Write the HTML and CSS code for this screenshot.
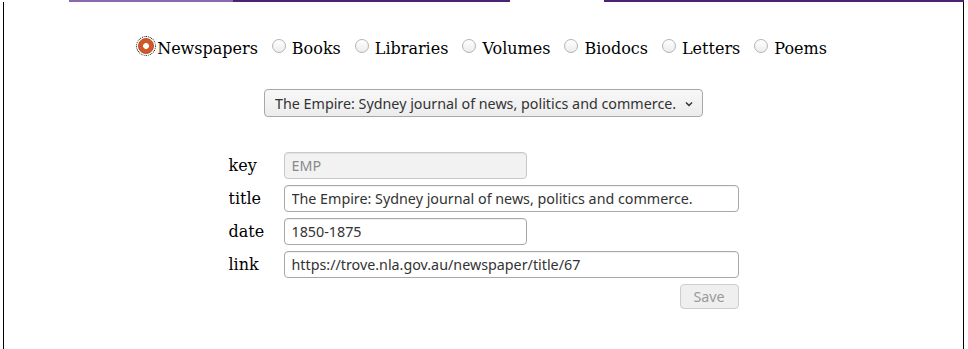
FILE: index.html
```html
<!DOCTYPE html>
<html lang="en">
<head>
  <meta charset="UTF-8" />
  <title>Sources</title>
  <link rel="stylesheet" href="styles.css">
</head>
<body>

  <!-- TAB STRIP (scrolled off, only the underline shows) -->
  <div class="tabline">
    <span class="tab-gap-left"></span>
    <span class="tab tab-hover"></span>
    <span class="tab tab-dark tab-wide"></span>
    <span class="tab-active"></span>
    <span class="tab tab-dark tab-rest"></span>
  </div>

  <div class="panel">

    <!-- SOURCE TYPE -->
    <div class="kinds">
      <label><input type="radio" name="kind" checked class="focused"> Newspapers</label>
      <label><input type="radio" name="kind"> Books</label>
      <label><input type="radio" name="kind"> Libraries</label>
      <label><input type="radio" name="kind"> Volumes</label>
      <label><input type="radio" name="kind"> Biodocs</label>
      <label><input type="radio" name="kind"> Letters</label>
      <label><input type="radio" name="kind"> Poems</label>
    </div>

    <!-- PICKER -->
    <div class="picker">
      <div class="select-wrap">
        <select>
          <option>The Empire: Sydney journal of news, politics and commerce.</option>
        </select>
        <svg class="chevron" width="8" height="6" viewBox="0 0 8 6">
          <path d="M1 1.5 L4 4.5 L7 1.5" fill="none" stroke="#333" stroke-width="1.5"/>
        </svg>
      </div>
    </div>

    <!-- EDIT FORM -->
    <form class="edit">
      <label for="key">key</label>
      <input type="text" id="key" class="short" value="EMP" disabled>

      <label for="title">title</label>
      <input type="text" id="title" class="long" value="The Empire: Sydney journal of news, politics and commerce.">

      <label for="date">date</label>
      <input type="text" id="date" class="short" value="1850-1875">

      <label for="link">link</label>
      <input type="text" id="link" class="long" value="https://trove.nla.gov.au/newspaper/title/67">

      <div class="actions">
        <button type="submit" disabled>Save</button>
      </div>
    </form>

  </div>

</body>
</html>
```

FILE: styles.css
```css
* {
  box-sizing: border-box;
}

body {
  margin: 0;
  font-family: "DejaVu Serif", serif;
  font-size: 16px;
  color: #000;
  background: #fff;
}

/* ===== TAB UNDERLINE ===== */
.tabline {
  display: flex;
  height: 2px;
}

.tab-gap-left {
  width: 69px;
}

.tab {
  background-color: #4a2472;
}

.tab-hover {
  width: 164px;
  background-color: #8a68ac;
}

.tab-wide {
  width: 277px;
}

.tab-active {
  width: 94px;
}

.tab-rest {
  width: 360px;
}

/* ===== PANEL ===== */
.panel {
  margin-left: 3px;
  width: 961px;
  height: 347px;
  border-left: 1px solid #000;
  border-right: 1px solid #000;
}

/* ===== RADIOS ===== */
.kinds {
  display: flex;
  justify-content: center;
  gap: 14px;
  padding-top: 36px;
  padding-right: 4px;
  line-height: 20px;
}

.kinds label {
  display: flex;
  align-items: center;
  gap: 6px;
  white-space: nowrap;
}

.kinds input {
  appearance: none;
  width: 14px;
  height: 14px;
  margin: 0 0 5px 0;
  border: 1px solid #b4b4b4;
  border-radius: 50%;
  background: linear-gradient(#fff, #ececec);
}

.kinds input:checked {
  width: 16px;
  height: 16px;
  margin-left: 2px;
  margin-right: -3px;
  border: 1px solid #b84a22;
  background: radial-gradient(circle, #fff 0 2.6px, #d0582b 3.2px);
}

.kinds input.focused {
  outline: 1px dotted #000;
  outline-offset: 1px;
}

/* ===== SELECT ===== */
.picker {
  display: flex;
  justify-content: center;
  margin-top: 30px;
}

.select-wrap {
  position: relative;
}

.select-wrap select {
  appearance: none;
  width: 439px;
  height: 28px;
  padding: 0 24px 0 10px;
  font-family: "Noto Sans", sans-serif;
  font-size: 14.3px;
  color: #333;
  border: 1px solid #a8a8a8;
  border-radius: 4px;
  background: linear-gradient(#f8f8f8, #ececec);
}

.chevron {
  position: absolute;
  right: 10px;
  top: 12px;
  pointer-events: none;
}

/* ===== FORM ===== */
.edit {
  display: grid;
  grid-template-columns: 55px 455px;
  row-gap: 6px;
  align-items: center;
  width: 510px;
  margin: 35px auto 0;
  line-height: 20px;
}

.edit input {
  height: 27px;
  padding: 0 7px;
  font-family: "Noto Sans", sans-serif;
  font-size: 14.3px;
  color: #333;
  border: 1px solid #a8a8a8;
  border-radius: 4px;
  background: #fff;
  box-shadow: inset 0 1px 1px rgba(0, 0, 0, 0.06);
}

.edit input.short {
  width: 243px;
}

.edit input.long {
  width: 455px;
}

.edit input:disabled {
  color: #8a8a8a;
  background: #f2f2f2;
  border-color: #c9c9c9;
}

.actions {
  grid-column: 2;
  display: flex;
  justify-content: flex-end;
}

.actions button {
  height: 25px;
  width: 59px;
  font-family: "Noto Sans", sans-serif;
  font-size: 14.3px;
  color: #9a9a9a;
  border: 1px solid #cdcdcd;
  border-radius: 4px;
  background: #efefef;
}
```
